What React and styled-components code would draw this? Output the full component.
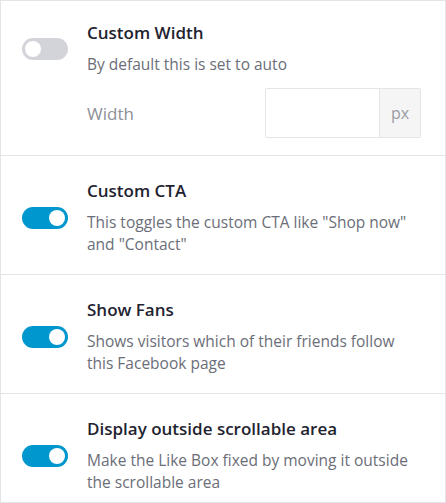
import React, { useState } from "react";
import styled, { createGlobalStyle } from "styled-components";

const Global = createGlobalStyle`
  html, body { margin: 0; padding: 0; background: #fff; }
  body { font-family: "Open Sans", "Noto Sans", sans-serif; -webkit-font-smoothing: antialiased; }
  * { box-sizing: border-box; }
`;

const Panel = styled.div`
  width: 446px;
  height: 503px;
  border: 1px solid #e2e4e7;
  background: #fff;
  display: flex;
  flex-direction: column;
`;

const Section = styled.section`
  padding: ${(p) => (p.$first ? "21px 24px 17px 21px" : "24px 24px 19px 21px")};
  border-top: ${(p) => (p.$first ? "none" : "1px solid #e2e4e7")};
  flex: ${(p) => (p.$grow ? 1 : "none")};
`;

const Head = styled.div`
  display: grid;
  grid-template-columns: 46px 1fr;
  column-gap: 19px;
  align-items: center;
`;

const Track = styled.button`
  position: relative;
  width: 46px;
  height: 22px;
  border: none;
  padding: 0;
  border-radius: 11px;
  cursor: pointer;
  background: ${(p) => (p.$on ? "#0096ce" : "#d3d4d9")};
`;

const Knob = styled.span`
  position: absolute;
  top: 3px;
  left: ${(p) => (p.$on ? "27px" : "3px")};
  width: 16px;
  height: 16px;
  border-radius: 50%;
  background: #fff;
`;

const Title = styled.div`
  font-size: 17px;
  font-weight: 600;
  line-height: 22px;
  color: #1f2330;
`;

const Desc = styled.div`
  margin-top: 9px;
  font-size: 15.5px;
  line-height: 22px;
  color: #6b6e78;
`;

const FieldRow = styled.div`
  margin: 13px 0 0 65px;
  display: flex;
  align-items: center;
  justify-content: space-between;
`;

const Label = styled.label`
  font-size: 17px;
  color: #8d9097;
`;

const InputGroup = styled.div`
  display: flex;
  width: 156px;
  height: 50px;
  border: 1px solid #e4e5e8;
  border-radius: 2px;
  overflow: hidden;
`;

const Input = styled.input`
  flex: 1;
  min-width: 0;
  border: none;
  outline: none;
  font-family: inherit;
  font-size: 15px;
  padding: 0 10px;
`;

const Addon = styled.span`
  width: 41px;
  display: flex;
  align-items: center;
  justify-content: center;
  border-left: 1px solid #e4e5e8;
  background: #f5f5f6;
  color: #9a9ca3;
  font-size: 16px;
`;

function Toggle({ on, onClick }) {
  return (
    <Track $on={on} onClick={onClick} aria-pressed={on}>
      <Knob $on={on} />
    </Track>
  );
}

const rows = [
  { key: "cta", title: "Custom CTA", desc: 'This toggles the custom CTA like "Shop now" and "Contact"' },
  { key: "fans", title: "Show Fans", desc: "Shows visitors which of their friends follow this Facebook page" },
  { key: "outside", title: "Display outside scrollable area", desc: "Make the Like Box fixed by moving it outside the scrollable area" },
];

export default function App() {
  const [state, setState] = useState({ width: false, cta: true, fans: true, outside: true });
  const flip = (k) => () => setState((s) => ({ ...s, [k]: !s[k] }));
  return (
    <>
      <Global />
      <Panel>
        <Section $first>
          <Head>
            <Toggle on={state.width} onClick={flip("width")} />
            <div>
              <Title>Custom Width</Title>
              <Desc>By default this is set to auto</Desc>
            </div>
          </Head>
          <FieldRow>
            <Label>Width</Label>
            <InputGroup>
              <Input />
              <Addon>px</Addon>
            </InputGroup>
          </FieldRow>
        </Section>
        {rows.map((r, i) => (
          <Section key={r.key} $grow={i === rows.length - 1}>
            <Head>
              <Toggle on={state[r.key]} onClick={flip(r.key)} />
              <div>
                <Title>{r.title}</Title>
                <Desc>{r.desc}</Desc>
              </div>
            </Head>
          </Section>
        ))}
      </Panel>
    </>
  );
}
